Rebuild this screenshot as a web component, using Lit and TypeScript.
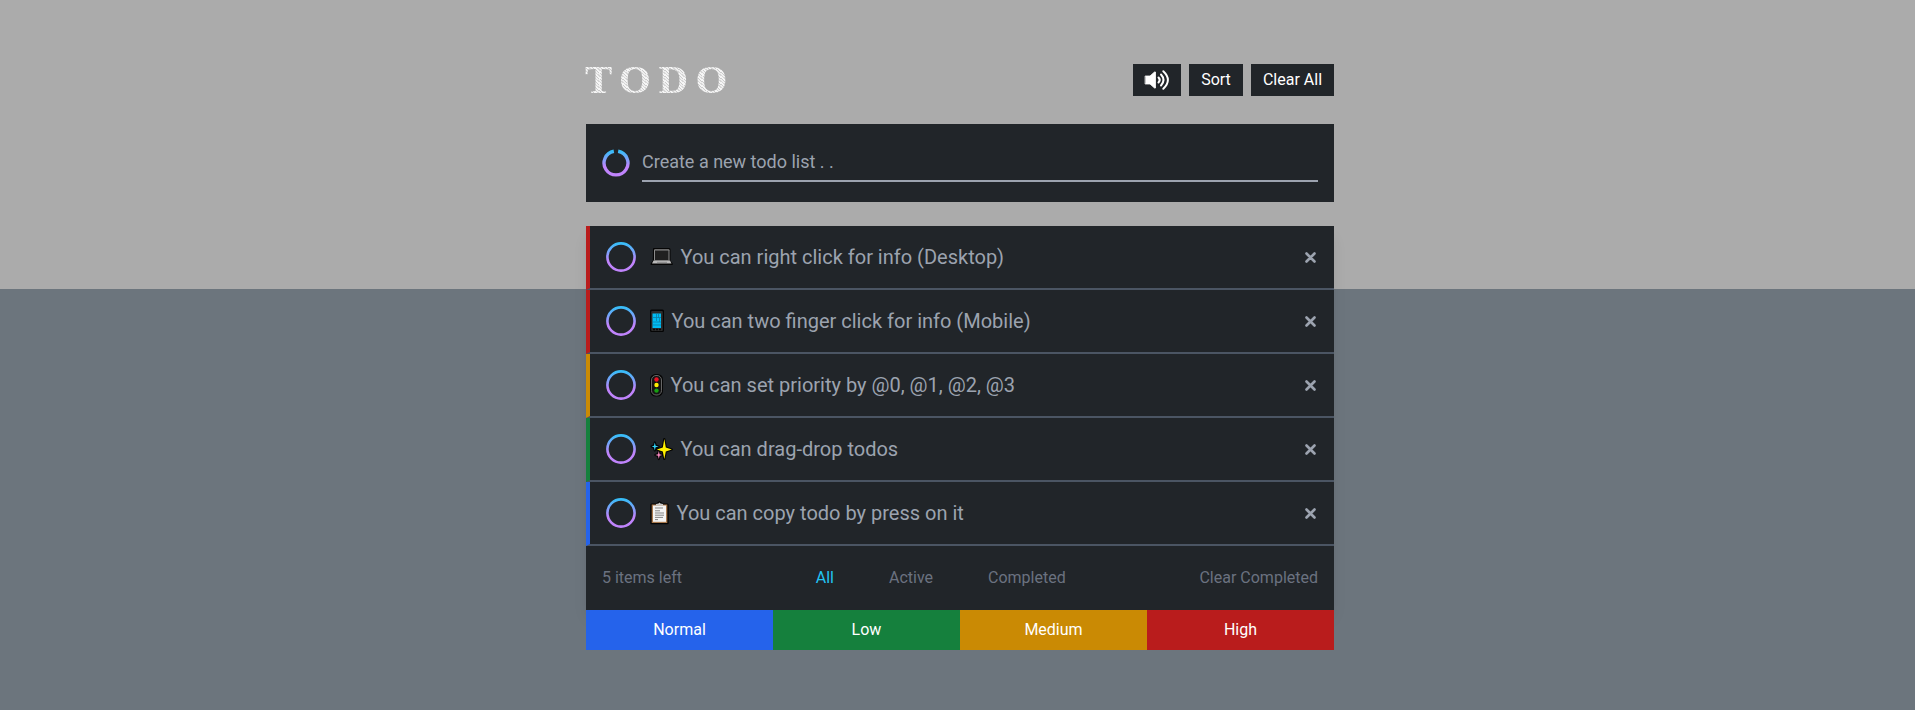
import { LitElement, html, svg, css } from "lit";
import { customElement, state } from "lit/decorators.js";
import { classMap } from "lit/directives/class-map.js";

const laptop = svg`<svg class="emoji" width="23" height="24" viewBox="0 0 23 24">
  <path d="M3 3.500Q3 3 4 3H19Q20.500 3 20.500 4.500V15.500L22.700 18.500V20H0.700V18.500L2.800 15.500Z" fill="#050505"/>
  <path d="M4 5.200Q4 4.300 5 4.300H18.500Q19.500 4.300 19.500 5.200V15.500H4Z" fill="#8c8c8c"/>
  <rect x="5" y="5.500" width="13.500" height="9.500" fill="#202020"/>
  <path d="M3.500 15.500H20L21.500 18.500H2Z" fill="#b9b9b9"/>
  <path d="M7 17.300H17" stroke="#8a8a8a"/>
</svg>`;
const phone = svg`<svg class="emoji" width="14" height="24" viewBox="0 0 14 24">
  <rect x="0" y="0.500" width="14" height="22.500" rx="1.500" fill="#050505"/>
  <rect x="1.200" y="2" width="11.600" height="20" rx="1" fill="#2c2c2c"/>
  <rect x="2.500" y="4.500" width="8.500" height="14.500" fill="#00bcf2"/>
  <path d="M6.500 5V12M8.500 5V9M2.500 8.500H11M2.500 13H11M2.500 16H11M9.500 9V13" stroke="#0a7fa5" stroke-width=".8"/>
  <path d="M3 20.500H5M6 20.500H8M9 20.500H11" stroke="#090909" stroke-width="1.500"/>
</svg>`;
const light = svg`<svg class="emoji" width="13" height="24" viewBox="0 0 13 24">
  <rect x="0" y="1" width="13" height="22.500" rx="5.500" fill="#050505"/>
  <rect x="1.500" y="2.500" width="10" height="19.500" rx="4.500" fill="#141414" stroke="#666" stroke-width="1"/>
  <circle cx="6.500" cy="6.500" r="2.200" fill="#e81123"/>
  <circle cx="6.500" cy="12" r="2.200" fill="#fff100"/>
  <circle cx="6.500" cy="17.600" r="2.200" fill="#16a010"/>
</svg>`;
const sparkles = svg`<svg class="emoji" width="23" height="24" viewBox="-0.800 0 23 24">
  <g stroke="#050505" stroke-width="2.200" stroke-linejoin="round">
    <path d="M13.500 2L15 10.500L21 12.500L15 14.500L13.500 22L12 14.500L6 12.500L12 10.500Z"/>
    <path d="M4 5.500L5 8.500L8 9.500L5 10.500L4 13.500L3 10.500L0.800 9.500L3 8.500Z"/>
    <path d="M8 14L9 17L11.500 18L9 19L8 22L7 19L4.500 18L7 17Z"/>
  </g>
  <path d="M13.500 2L15 10.500L21 12.500L15 14.500L13.500 22L12 14.500L6 12.500L12 10.500Z" fill="#fff100"/>
  <path d="M4 5.500L4.800 8.700L8 9.500L4.800 10.300L4 13.500L3.200 10.300L0.800 9.500L3.200 8.700Z" fill="#31d2f7"/>
  <path d="M8 14L8.800 17.200L11.500 18L8.800 18.800L8 22L7.200 18.800L4.500 18L7.200 17.200Z" fill="#f78ac0"/>
</svg>`;
const clipboard = svg`<svg class="emoji" width="19" height="24" viewBox="0 0 19 24">
  <path d="M1.500 2.500H6L9.500 0L13 2.500H17.500Q18.700 2.500 18.700 4V22Q18.700 23.200 17.500 23.200H1.500Q.3 23.200 .3 22V4Q.3 2.500 1.500 2.500Z" fill="#050505"/>
  <rect x="1.700" y="3.500" width="15.600" height="18.500" fill="#a8794d"/>
  <rect x="3" y="4.500" width="13" height="16.300" fill="#f4f4f4"/>
  <path d="M6 4.500V3L8.500 2.500L9.500 1.500L10.500 2.500L13 3V4.500Z" fill="#c9c9c9"/>
  <path d="M5 7H13M5 9.800H10M5 12H14M5 14.200H14M5 16.400H13M5 18.600H8" stroke="#858585" stroke-width="1"/>
</svg>`;

const todos = [
  { icon: laptop, text: "You can right click for info (Desktop)", level: "high" },
  { icon: phone, text: "You can two finger click for info (Mobile)", level: "high" },
  { icon: light, text: "You can set priority by @0, @1, @2, @3", level: "medium" },
  { icon: sparkles, text: "You can drag-drop todos", level: "low" },
  { icon: clipboard, text: "You can copy todo by press on it", level: "normal" },
];

@customElement("app-root")
class AppRoot extends LitElement {
  @state() filter = "All";

  static styles = css`
    :host { display: block; min-height: 710px; box-sizing: border-box; padding: 64px 0 60px 5px;
      background: linear-gradient(#ababab 289px, #6c757d 289px);
      font: 16px/24px Roboto, sans-serif; color: #fff; }
    * { box-sizing: border-box; }
    main { width: 748px; margin: 0 auto; }
    header { display: flex; justify-content: space-between; align-items: center; height: 32px; }
    h1 { margin: 0 0 2px -1px; font: bold 41px/48px "Liberation Serif", serif; letter-spacing: 7.5px; color: transparent;
      background: repeating-linear-gradient(38deg, #f6f6f6 0 1.6px, #d6d6d6 1.6px 2.600px, #f0f0f0 2.600px 4px, #cbcbcb 4px 4.700px);
      -webkit-background-clip: text; background-clip: text; }
    .actions { display: flex; gap: 8px; }
    button { font: inherit; color: inherit; background: none; border: 0; padding: 0; }
    .actions button { height: 32px; background: #212529; display: flex; align-items: center; justify-content: center; }
    .sound { width: 48px; } .sort { width: 54px; } .clear { width: 83px; }
    .create { display: flex; height: 78px; margin-top: 28px; background: #212529; padding: 16px 16px 20px; gap: 12px; }
    .create svg { margin: 9px 0 0; flex: none; }
    input { flex: 1; min-width: 0; height: 42px; padding: 2px 0 0; border: 0; border-bottom: 2px solid #9ca3af;
      background: none; font: 18px Roboto, sans-serif; outline: 0; color: #9ca3af; }
    input::placeholder { color: #9ca3af; opacity: 1; }
    .board { margin-top: 24px; background: #212529; box-shadow: 0 10px 15px -3px rgba(0,0,0,.1), 0 4px 6px -4px rgba(0,0,0,.1); }
    ul { list-style: none; margin: 0; padding: 0; }
    li { height: 64px; display: flex; align-items: center; border-bottom: 2px solid #4b5563; border-left: 4px solid;
      padding: 0 18px 0 16px; font-size: 20px; line-height: 28px; color: #9ca3af; }
    li.high { border-left-color: #b91c1c; } li.medium { border-left-color: #ca8a04; }
    li.low { border-left-color: #15803d; } li.normal { border-left-color: #2563eb; }
    .ring { flex: none; margin-right: 14px; }
    .emoji { flex: none; margin-right: 7.5px; }
    .text { flex: 1; white-space: nowrap; }
    .foot { height: 64px; padding: 0 16px; display: flex; align-items: center; justify-content: space-between; color: #6b7280; }
    .filters { display: flex; gap: 55px; }
    .on { color: #22c3f3; }
    .levels { display: grid; grid-template-columns: repeat(4, 1fr); height: 40px; }
    .levels div { display: flex; align-items: center; justify-content: center; }
    .b-normal { background: #2563eb; } .b-low { background: #15803d; }
    .b-medium { background: #ca8a04; } .b-high { background: #b91c1c; }
  `;

  ring(w: number, gap = false) {
    return html`<svg class="ring" width=${w} height=${w} viewBox="0 0 30 30">
      <defs><linearGradient id="g" x1="0" y1="0" x2="0" y2="1"><stop offset="0" stop-color="#38bdf8"/><stop offset=".65" stop-color="#c084fc"/></linearGradient></defs>
      ${gap
        ? svg`<path d="M17.300 2.400A12.800 12.800 0 1 1 12.700 2.400" fill="none" stroke="url(#g)" stroke-width="3.600"/>`
        : svg`<circle cx="15" cy="15" r="13.600" fill="none" stroke="url(#g)" stroke-width="2.600"/>`}
    </svg>`;
  }

  render() {
    return html`<main>
      <header>
        <h1>TODO</h1>
        <div class="actions">
          <button class="sound" aria-label="Sound"><svg width="26" height="22" viewBox="0 0 26 22" fill="none" stroke="#fff" stroke-width="2" stroke-linecap="round">
            <path d="M1.500 7H6L10.500 3H11.500V19H10.500L6 15H1.500Z" fill="#fff" stroke-width=".8" stroke-linejoin="round"/>
            <path d="M14.500 8.500Q17 11 14.500 13.500M17 5.500Q22 11 17 16.500M19.300 2.300Q28.500 11 19.300 19.700"/></svg></button>
          <button class="sort">Sort</button>
          <button class="clear">Clear All</button>
        </div>
      </header>
      <section class="create">${this.ring(28, true)}<input placeholder="Create a new todo list . ."></section>
      <section class="board">
        <ul>${todos.map((t) => html`<li class=${t.level}>
          ${this.ring(30)}${t.icon}<span class="text">${t.text}</span>
          <svg width="11" height="11" viewBox="0 0 11 11"><path d="M1.500 1.500L9.500 9.500M9.500 1.500L1.500 9.500" stroke="#9ca3af" stroke-width="2.600" stroke-linecap="round"/></svg>
        </li>`)}</ul>
        <div class="foot"><span>5 items left</span>
          <div class="filters">${["All", "Active", "Completed"].map((f) => html`<button class=${classMap({ on: this.filter === f })} @click=${() => (this.filter = f)}>${f}</button>`)}</div>
          <button>Clear Completed</button></div>
      </section>
      <div class="levels"><div class="b-normal">Normal</div><div class="b-low">Low</div><div class="b-medium">Medium</div><div class="b-high">High</div></div>
    </main>`;
  }
}
